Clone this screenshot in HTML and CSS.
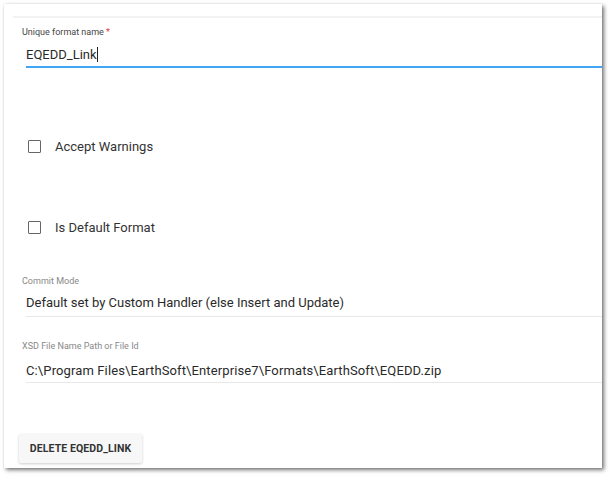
FILE: index.html
```html
<!DOCTYPE html>
<html>
<head>
<meta charset="utf-8">
<link rel="stylesheet" href="styles.css">
</head>
<body>
<div class="panel">
  <div class="topline"></div>
  <div class="field first">
    <div class="label">Unique format name<span class="req">*</span></div>
    <div class="value focused">EQEDD_Link<span class="caret"></span></div>
  </div>
  <label class="check c1">
    <span class="box"></span>
    <span class="check-text">Accept Warnings</span>
  </label>
  <label class="check c2">
    <span class="box"></span>
    <span class="check-text">Is Default Format</span>
  </label>
  <div class="field commit">
    <div class="label">Commit Mode</div>
    <div class="value">Default set by Custom Handler (else Insert and Update)</div>
  </div>
  <div class="field xsd">
    <div class="label">XSD File Name Path or File Id</div>
    <div class="value">C:\Program Files\EarthSoft\Enterprise7\Formats\EarthSoft\EQEDD.zip</div>
  </div>
  <div class="actions">
    <button class="btn">DELETE EQEDD_LINK</button>
  </div>
</div>
</body>
</html>
```
FILE: styles.css
```css
html, body {
  margin: 0;
  padding: 0;
  background: #ffffff;
}
body {
  width: 611px;
  height: 478px;
  overflow: hidden;
  font-family: Roboto, "Liberation Sans", sans-serif;
}
.panel {
  margin: 4px 0 0 4px;
  width: 598px;
  height: 464px;
  background: #fff;
  box-shadow: 2px 2px 4px rgba(0,0,0,0.55), 0 0 1px rgba(0,0,0,0.15);
  overflow: hidden;
  box-sizing: border-box;
}
.topline {
  margin: 12px 0 0 9px;
  height: 2px;
  background: #f2f2f2;
}
.field {
  margin-left: 18px;
}
.label {
  font-size: 9px;
  color: #888;
  line-height: 12px;
}
.req {
  color: #e53935;
  margin-left: 2px;
}
.value {
  margin-left: 4px;
  font-size: 13px;
  color: #2a2a2a;
  line-height: 18px;
  border-bottom: 1px solid #e8e8e8;
}
.first {
  margin-top: 8px;
}
.first .label {
  color: #444;
}
.first .value {
  margin-top: 8px;
  padding-bottom: 2px;
  border-bottom: 2px solid #42a5f5;
}
.caret {
  display: inline-block;
  width: 1px;
  height: 15px;
  background: #222;
  vertical-align: -3px;
}
.check {
  display: flex;
  align-items: center;
  margin-left: 24px;
  height: 20px;
}
.c1 {
  margin-top: 68px;
}
.c2 {
  margin-top: 61px;
}
.box {
  width: 11px;
  height: 11px;
  border: 1.5px solid #666;
  border-radius: 1px;
  margin-right: 14px;
}
.check-text {
  font-size: 13px;
  color: #333;
}
.commit {
  margin-top: 38px;
}
.commit .value {
  margin-top: 7px;
  padding-bottom: 4px;
}
.xsd {
  margin-top: 23px;
}
.xsd .value {
  margin-top: 10px;
  padding-bottom: 2px;
  letter-spacing: 0.12px;
}
.actions {
  margin: 51px 0 0 15px;
}
.btn {
  font-family: Roboto, "Liberation Sans", sans-serif;
  font-size: 10.5px;
  letter-spacing: 0.1px;
  font-weight: 700;
  color: #333;
  background: #f7f7f7;
  border: none;
  border-radius: 2px;
  padding: 0;
  height: 29px;
  width: 123px;
  box-shadow: 0 1px 3px rgba(0,0,0,0.2);
}
```
